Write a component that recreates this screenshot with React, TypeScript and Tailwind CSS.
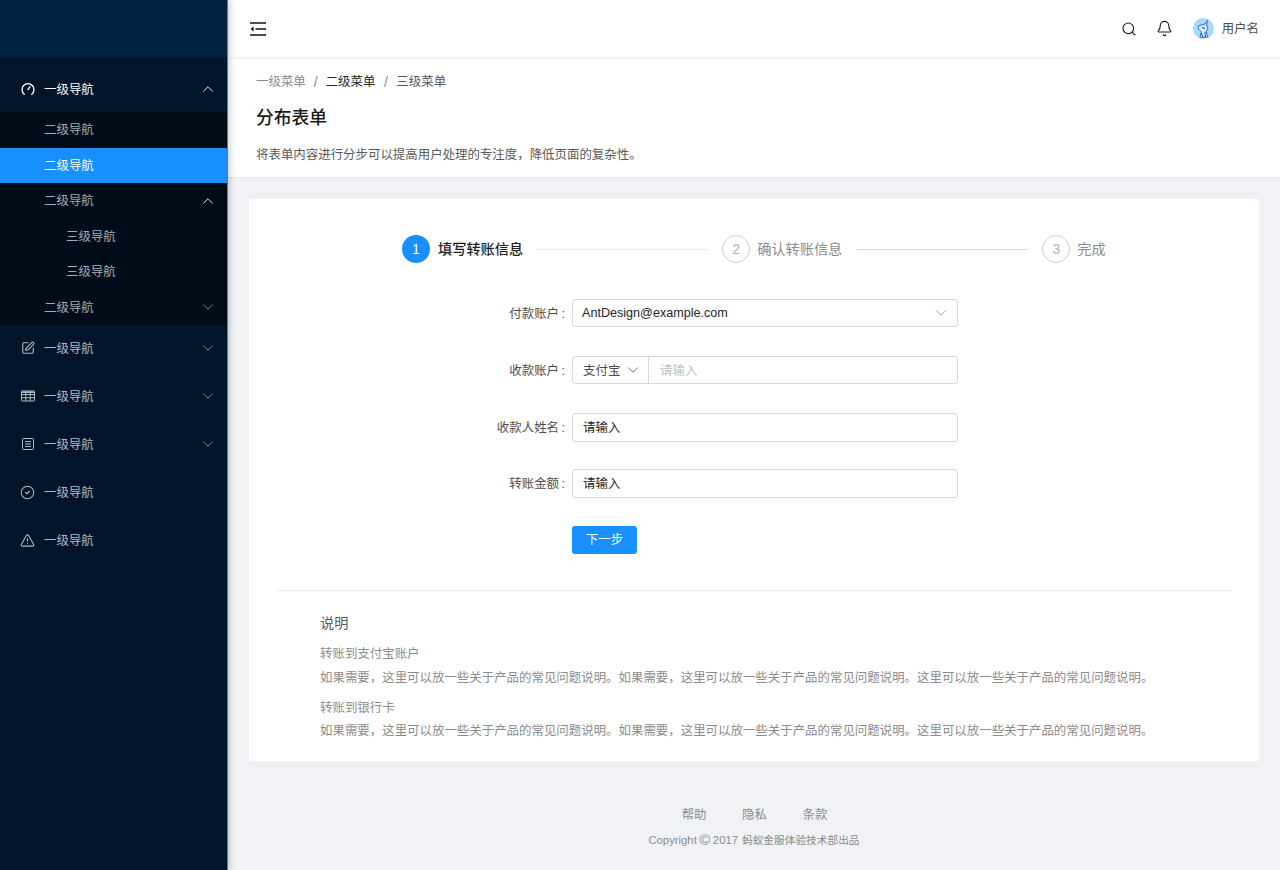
import { Search, Bell, ChevronDown, ChevronUp, SquarePen, CircleCheck, TriangleAlert } from "lucide-react";

function GaugeIcon() {
  return (
    <svg width="14" height="14" viewBox="0 0 14 14" fill="none" stroke="currentColor" strokeWidth="1.3" strokeLinecap="round">
      <path d="M3.2 12.3A6 6 0 1 1 10.8 12.3" />
      <path d="M7 7.6L9 4.6" />
    </svg>
  );
}

function TableIcon() {
  return (
    <svg width="14" height="14" viewBox="0 0 14 14" fill="none" stroke="currentColor" strokeWidth="1">
      <rect x="0.5" y="2" width="13" height="10" rx="0.6" />
      <path d="M0.5 5.5H13.5M0.5 8.8H13.5M4.8 2V12M9.2 2V12" />
      <path d="M0.5 3.2H13.5" strokeWidth="1.6" />
    </svg>
  );
}

function ListIcon() {
  return (
    <svg width="14" height="14" viewBox="0 0 14 14" fill="none" stroke="currentColor" strokeWidth="1">
      <rect x="1.5" y="1.5" width="11" height="11" rx="0.8" />
      <path d="M4 4.6H10M4 7H10M4 9.4H10" />
    </svg>
  );
}

function CollapseIcon() {
  return (
    <svg width="16" height="14" viewBox="0 0 16 14" fill="none" stroke="#111" strokeWidth="1.3">
      <path d="M0 1H16M5.5 7H16M0 13H16" />
      <path d="M3.6 4.6L0.6 7L3.6 9.4Z" fill="#111" stroke="none" />
    </svg>
  );
}

function Avatar() {
  return (
    <svg width="21" height="21" viewBox="0 0 21 21">
      <circle cx="10.5" cy="10.5" r="10.5" fill="#a9d8fb" />
      <path d="M5 8L12 6L14.5 2.5L13.5 7L15 11L13 13L15 19L7 19.5L8.5 14L5.5 11Z" fill="#d6ecff" stroke="#2a66cc" strokeWidth="0.9" />
      <path d="M8 15L10 19M12 14L12.5 19M9 9.5L12 10.5" stroke="#1f55b8" strokeWidth="1.1" fill="none" />
    </svg>
  );
}

function TopItem({ icon, open, active, chevron = true }: { icon: React.ReactNode; open?: boolean; active?: boolean; chevron?: boolean }) {
  return (
    <div className={`flex h-[46px] items-center pl-[20px] pr-[10px] ${active ? "text-white" : "text-[#b3b9bf]"}`}>
      <span className="flex w-[15px] justify-center">{icon}</span>
      <span className="ml-[9px] flex-1 pt-[2px]">一级导航</span>
      {chevron && (open ? <ChevronUp size={18} strokeWidth={1.2} className="text-white" /> : <ChevronDown size={18} strokeWidth={1.2} className="text-[#8f969d]" />)}
    </div>
  );
}

function SubItem({ label, active, indent, chevron }: { label: string; active?: boolean; indent?: boolean; chevron?: "up" | "down" }) {
  return (
    <div
      className={`flex h-[35.5px] items-center pr-[10px] ${indent ? "pl-[66px]" : "pl-[44px]"} ${
        active ? "bg-[#1890ff] text-white" : "text-[#a6adb4]"
      }`}
    >
      <span className="flex-1 pt-[2px]">{label}</span>
      {chevron === "up" && <ChevronUp size={18} strokeWidth={1.2} className="text-white" />}
      {chevron === "down" && <ChevronDown size={18} strokeWidth={1.2} className="text-[#8f969d]" />}
    </div>
  );
}

function Sidebar() {
  return (
    <aside className="relative z-20 flex w-[228px] shrink-0 flex-col border-r border-[#6d7680] bg-[#001529] text-[12.45px] shadow-[2px_0_6px_rgba(0,21,41,0.2)]">
      <div className="h-[57px] bg-[#002140]" />
      <div className="pt-[9px]">
        <TopItem icon={<GaugeIcon />} open active />
        <div className="bg-[#000c17]">
          <SubItem label="二级导航" />
          <SubItem label="二级导航" active />
          <SubItem label="二级导航" chevron="up" />
          <SubItem label="三级导航" indent />
          <SubItem label="三级导航" indent />
          <SubItem label="二级导航" chevron="down" />
        </div>
        <div className="flex flex-col gap-[2px]">
          <TopItem icon={<SquarePen size={14} strokeWidth={1.9} />} />
          <TopItem icon={<TableIcon />} />
          <TopItem icon={<ListIcon />} />
          <TopItem icon={<CircleCheck size={15} strokeWidth={1.7} />} chevron={false} />
          <TopItem icon={<TriangleAlert size={15} strokeWidth={1.7} />} chevron={false} />
        </div>
      </div>
    </aside>
  );
}

function Step({ n, label, active }: { n: number; label: string; active?: boolean }) {
  return (
    <div className="flex items-center">
      <span
        className={`flex h-[28px] w-[28px] items-center justify-center rounded-full text-[14px] ${
          active ? "bg-[#1890ff] text-white" : "border border-[#d0d0d0] text-[#b3b3b3]"
        }`}
      >
        {n}
      </span>
      <span className={`pt-[2px] text-[14.2px] ${active ? "ml-[8px] font-medium text-[#1f1f1f]" : "ml-[7px] text-[#8c8c8c]"}`}>{label}</span>
    </div>
  );
}

function FormRow({ label, children }: { label: string; children: React.ReactNode }) {
  return (
    <div className="flex h-[29px] items-start">
      <label className="flex h-[29px] w-[322px] items-center justify-end pr-[7px] pt-[2px] text-[12.45px] text-[#4d4d4d]">
        {label}
        <span className="ml-[2.5px] font-['Liberation_Sans',sans-serif]">:</span>
      </label>
      <div className="w-[386px]">{children}</div>
    </div>
  );
}

function Explain({ title }: { title: string }) {
  return (
    <>
      <div className="mt-[6.5px] h-[23.5px] leading-[23.5px]">{title}</div>
      <div className="h-[23.5px] leading-[23.5px]">
        如果需要，这里可以放一些关于产品的常见问题说明。如果需要，这里可以放一些关于产品的常见问题说明。这里可以放一些关于产品的常见问题说明。
      </div>
    </>
  );
}

export default function App() {
  return (
    <div className="flex h-[870px] w-[1280px] overflow-hidden bg-[#f0f2f5] font-['Liberation_Sans','Noto_Sans_CJK_SC',sans-serif]">
      <Sidebar />
      <div className="flex min-w-0 flex-1 flex-col">
        {/* Header */}
        <header className="relative z-10 flex h-[57px] items-center bg-white pl-[22px] pr-[21px] shadow-[0_1px_3px_rgba(0,21,41,0.1)]">
          <CollapseIcon />
          <div className="flex-1" />
          <Search size={16} strokeWidth={1.7} className="text-[#1f1f1f]" />
          <Bell size={17} strokeWidth={1.6} className="ml-[19px] text-[#1f1f1f]" />
          <span className="ml-[20px]">
            <Avatar />
          </span>
          <span className="ml-[8px] pt-[1px] text-[12.45px] text-[#4d4d4d]">用户名</span>
        </header>

        {/* Page title */}
        <div className="flex h-[121px] flex-col border-b border-[#e8e8e8] bg-white pl-[28px] pt-[15px]">
          <div className="flex items-center text-[12.45px] leading-[20px] text-[#8c8c8c]">
            <span>一级菜单</span>
            <span className="mx-[8px] text-[14px]">/</span>
            <span className="text-[#262626]">二级菜单</span>
            <span className="mx-[8.5px] text-[14px]">/</span>
            <span className="text-[#595959]">三级菜单</span>
          </div>
          <h1 className="mt-[14px] text-[17.8px] font-medium leading-[24px] text-[#1a1a1a]">分布表单</h1>
          <p className="mt-[15px] text-[12.45px] leading-[20px] text-[#595959]">将表单内容进行分步可以提高用户处理的专注度，降低页面的复杂性。</p>
        </div>

        {/* Card */}
        <div className="mx-[21px] mt-[21px] h-[562px] bg-white px-[28px]">
          <div className="flex items-center pl-[125px] pt-[36px]">
            <Step n={1} label="填写转账信息" active />
            <div className="mx-[14px] h-px w-[171px] bg-[#e8e8e8]" />
            <Step n={2} label="确认转账信息" />
            <div className="ml-[15px] mr-[14px] h-px w-[171px] bg-[#d9d9d9]" />
            <Step n={3} label="完成" />
          </div>

          <div className="-ml-[27px] mt-[36px] flex flex-col gap-[28px]">
            <FormRow label="付款账户">
              <div className="flex h-[28px] items-center justify-between rounded-[3px] border border-[#d9d9d9] pl-[9px] pr-[7px] text-[12.6px] text-[#262626]">
                <span>AntDesign@example.com</span>
                <ChevronDown size={18} strokeWidth={1.1} className="text-[#8c8c8c]" />
              </div>
            </FormRow>
            <FormRow label="收款账户">
              <div className="flex h-[28px] items-center rounded-[3px] border border-[#d9d9d9] text-[12.45px]">
                <span className="flex h-full w-[76px] items-center justify-between border-r border-[#d9d9d9] pl-[10px] pr-[6px] text-[#4d4d4d]">
                  <span className="pt-[2px]">支付宝</span>
                  <ChevronDown size={18} strokeWidth={1.1} className="text-[#595959]" />
                </span>
                <span className="pl-[11px] pt-[2px] text-[#bfbfbf]">请输入</span>
              </div>
            </FormRow>
            <FormRow label="收款人姓名">
              <div className="flex h-[29px] items-center rounded-[3px] border border-[#d9d9d9] pl-[10px] pt-[2px] text-[12.45px] text-[#262626]">请输入</div>
            </FormRow>
            <div className="-mt-[1px]">
              <FormRow label="转账金额">
                <div className="flex h-[29px] items-center rounded-[3px] border border-[#d9d9d9] pl-[10px] pt-[2px] text-[12.45px] text-[#262626]">请输入</div>
              </FormRow>
            </div>
            <div className="pl-[322px]">
              <button className="h-[28px] w-[65px] rounded-[3px] bg-[#1890ff] pt-[1px] text-[12.45px] text-white">下一步</button>
            </div>
          </div>

          <div className="mt-[36px] border-t border-[#e8e8e8] pl-[43px] pt-[20px] text-[12.45px] text-[#8c8c8c]">
            <h3 className="h-[25.5px] text-[14.2px] leading-[24px] text-[#595959]">说明</h3>
            <Explain title="转账到支付宝账户" />
            <Explain title="转账到银行卡" />
          </div>
        </div>

        {/* Footer */}
        <footer className="mt-[44px] flex flex-col items-center text-[#8c8c8c]">
          <div className="flex gap-[35.5px] pl-[1px] text-[12.45px] leading-[20px]">
            <span>帮助</span>
            <span>隐私</span>
            <span>条款</span>
          </div>
          <div className="mt-[6px] flex h-[18px] items-center text-[11.3px]">
            Copyright
            <span className="mx-[2.5px] text-[15px] leading-[18px]">©</span>
            2017
            <span className="ml-[4px] text-[10.7px]">蚂蚁金服体验技术部出品</span>
          </div>
        </footer>
      </div>
    </div>
  );
}
